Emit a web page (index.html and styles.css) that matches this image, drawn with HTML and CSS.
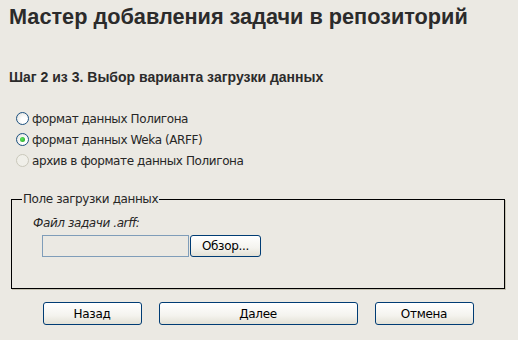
FILE: index.html
```html
<!DOCTYPE html>
<html lang="ru">
<head>
<meta charset="utf-8">
<link rel="stylesheet" href="styles.css">
</head>
<body>
<div class="page">
  <h1 class="title">Мастер добавления задачи в репозиторий</h1>
  <h2 class="step">Шаг 2 из 3. Выбор варианта загрузки данных</h2>
  <div class="options">
    <label class="opt"><input type="radio" name="fmt" class="radio"><span>формат данных Полигона</span></label>
    <label class="opt"><input type="radio" name="fmt" class="radio" checked><span>формат данных Weka (ARFF)</span></label>
    <label class="opt"><input type="radio" name="fmt" class="radio" disabled><span>архив в формате данных Полигона</span></label>
  </div>
  <fieldset class="upload">
    <legend class="legend">Поле загрузки данных</legend>
    <div class="file-label">Файл задачи .arff:</div>
    <div class="file-row">
      <input type="text" class="file-input">
      <button class="btn browse">Обзор...</button>
    </div>
  </fieldset>
  <div class="actions">
    <button class="btn nav">Назад</button>
    <button class="btn nav wide">Далее</button>
    <button class="btn nav">Отмена</button>
  </div>
</div>
</body>
</html>
```
FILE: styles.css
```css
html, body {
  margin: 0;
  padding: 0;
  background: #ebe9e3;
}
.page {
  width: 518px;
  height: 340px;
  font-family: "DejaVu Sans", sans-serif;
  color: #222;
}
.title {
  margin: 5px 0 0 9px;
  font-family: "Liberation Sans", Arial, sans-serif;
  font-size: 21.7px;
  line-height: 24px;
  font-weight: bold;
  color: #2b2b2b;
}
.step {
  margin: 40px 0 0 9px;
  font-family: "Liberation Sans", Arial, sans-serif;
  font-size: 14px;
  line-height: 16px;
  font-weight: bold;
  color: #2b2b2b;
}
.options {
  margin: 23px 0 0 16px;
  display: flex;
  flex-direction: column;
}
.opt {
  display: flex;
  align-items: center;
  height: 21px;
  font-size: 12px;
  letter-spacing: -0.4px;
  color: #262626;
}
.radio {
  appearance: none;
  -webkit-appearance: none;
  width: 13px;
  height: 13px;
  margin: 0 3px 0 0;
  border: 1px solid #1c5180;
  border-radius: 50%;
  background: radial-gradient(circle at 65% 65%, #ffffff 30%, #dcdcd6 100%);
  box-sizing: border-box;
  position: relative;
}
.radio:checked::after {
  content: "";
  position: absolute;
  left: 3px;
  top: 3px;
  width: 5px;
  height: 5px;
  border-radius: 50%;
  background: radial-gradient(circle at 40% 40%, #5ee85e, #1e9a1e);
}
.radio:disabled {
  border-color: #cac8bb;
  background: #f0efe9;
}
.upload {
  margin: 21px 13px 0 11px;
  padding: 0;
  height: 97px;
  box-sizing: border-box;
  border: 1px solid #000;
  box-shadow: 1px 1px 0 #c5c2b2;
}
.legend {
  margin-left: 10px;
  padding: 0 1px;
  font-size: 12px;
  letter-spacing: -0.4px;
  line-height: 14px;
  color: #262626;
}
.file-label {
  margin: 10px 0 0 21px;
  font-size: 12px;
  letter-spacing: -0.4px;
  font-style: italic;
  line-height: 14px;
  color: #262626;
}
.file-row {
  display: flex;
  align-items: center;
  margin: 5px 0 0 30px;
}
.file-input {
  width: 147px;
  height: 22px;
  box-sizing: border-box;
  border: 1px solid #7f9db9;
  background: #ebe9e3;
  margin: 0 1px 0 0;
  padding: 0;
}
.btn {
  height: 22px;
  box-sizing: border-box;
  border: 1px solid #003c74;
  border-radius: 3px;
  background: linear-gradient(#ffffff, #f4f3ee 60%, #e3e1d6);
  font-family: "DejaVu Sans", sans-serif;
  font-size: 12px;
  letter-spacing: -0.3px;
  color: #000;
  padding: 0;
}
.browse {
  width: 71px;
}
.actions {
  display: flex;
  justify-content: center;
  gap: 17px;
  margin: 13px 2px 0 0;
}
.nav {
  width: 99px;
  height: 23px;
}
.nav.wide {
  width: 199px;
}
```
